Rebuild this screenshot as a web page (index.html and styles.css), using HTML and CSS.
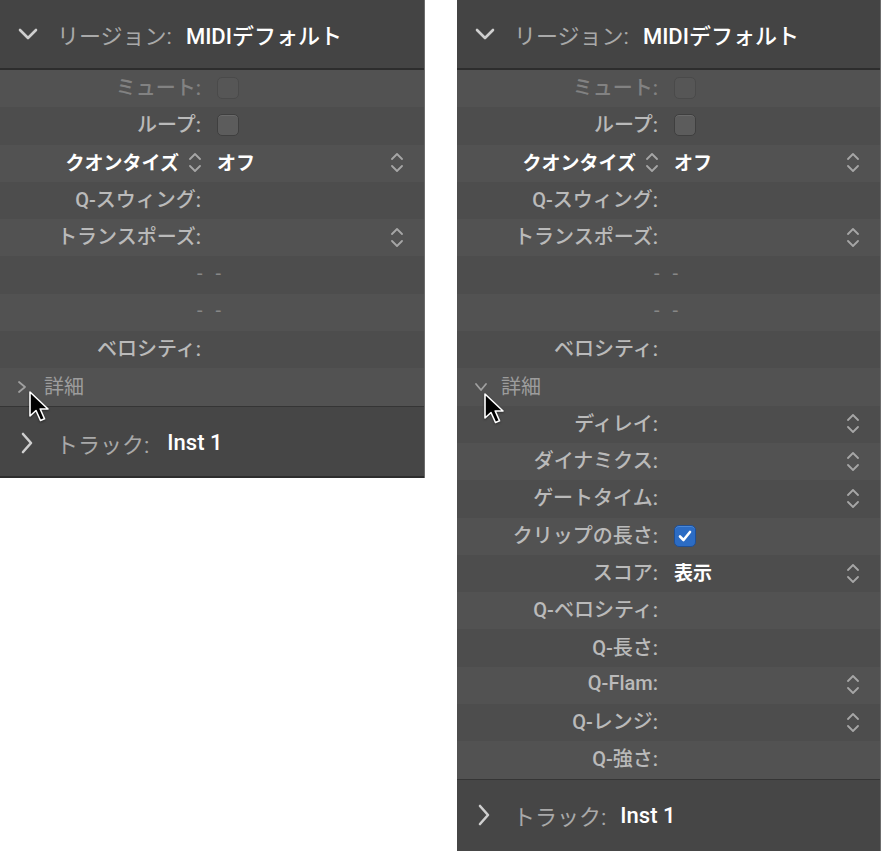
FILE: index.html
```html
<!DOCTYPE html>
<html lang="ja">
<head>
  <meta charset="UTF-8">
  <meta name="viewport" content="width=device-width, initial-scale=1.0">
  <title>リージョンインスペクタ</title>
  <link rel="stylesheet" href="styles.css">
</head>
<body>
  <div class="inspectors">

    <!-- closed details -->
    <section class="panel panel-left">
      <div class="panel-head">
        <svg class="chev-down" width="20" height="12" viewBox="0 0 20 12"><polyline points="2,2 10,10 18,2"/></svg>
        <span class="head-label">リージョン:</span>
        <span class="head-value">MIDIデフォルト</span>
      </div>
      <div class="rows">
        <div class="row"><span class="label dim">ミュート:</span><span class="value"><span class="check dim"></span></span></div>
        <div class="row"><span class="label">ループ:</span><span class="value"><span class="check"></span></span></div>
        <div class="row">
          <span class="label strong">クオンタイズ <svg class="stepper" width="12" height="21" viewBox="0 0 12 21"><polyline points="1,7 6,2 11,7"/><polyline points="1,14 6,19 11,14"/></svg></span>
          <span class="value strong">オフ</span>
          <svg class="stepper" width="12" height="21" viewBox="0 0 12 21"><polyline points="1,7 6,2 11,7"/><polyline points="1,14 6,19 11,14"/></svg>
        </div>
        <div class="row"><span class="label">Q-スウィング:</span><span class="value"></span></div>
        <div class="row">
          <span class="label">トランスポーズ:</span><span class="value"></span>
          <svg class="stepper" width="12" height="21" viewBox="0 0 12 21"><polyline points="1,7 6,2 11,7"/><polyline points="1,14 6,19 11,14"/></svg>
        </div>
        <div class="row"><span class="dashes">- -</span></div>
        <div class="row"><span class="dashes">- -</span></div>
        <div class="row"><span class="label">ベロシティ:</span><span class="value"></span></div>
        <div class="row disclosure">
          <svg class="chev-small" width="10" height="14" viewBox="0 0 10 14"><polyline points="2,2 8,7 2,12"/></svg>
          <span>詳細</span>
        </div>
      </div>
      <div class="panel-foot">
        <svg class="chev-right" width="14" height="22" viewBox="0 0 14 22"><polyline points="3,2 11,11 3,20"/></svg>
        <span class="head-label">トラック:</span>
        <span class="head-value">Inst 1</span>
      </div>
      <svg class="cursor cursor-left" width="24" height="34" viewBox="0 0 24 34"><path d="M2,2 L2,26 L8,20.5 L12.5,30.5 L16.5,28.8 L12.2,19 L20,19 Z"/></svg>
    </section>

    <!-- open details -->
    <section class="panel panel-right">
      <div class="panel-head">
        <svg class="chev-down" width="20" height="12" viewBox="0 0 20 12"><polyline points="2,2 10,10 18,2"/></svg>
        <span class="head-label">リージョン:</span>
        <span class="head-value">MIDIデフォルト</span>
      </div>
      <div class="rows">
        <div class="row"><span class="label dim">ミュート:</span><span class="value"><span class="check dim"></span></span></div>
        <div class="row"><span class="label">ループ:</span><span class="value"><span class="check"></span></span></div>
        <div class="row">
          <span class="label strong">クオンタイズ <svg class="stepper" width="12" height="21" viewBox="0 0 12 21"><polyline points="1,7 6,2 11,7"/><polyline points="1,14 6,19 11,14"/></svg></span>
          <span class="value strong">オフ</span>
          <svg class="stepper" width="12" height="21" viewBox="0 0 12 21"><polyline points="1,7 6,2 11,7"/><polyline points="1,14 6,19 11,14"/></svg>
        </div>
        <div class="row"><span class="label">Q-スウィング:</span><span class="value"></span></div>
        <div class="row">
          <span class="label">トランスポーズ:</span><span class="value"></span>
          <svg class="stepper" width="12" height="21" viewBox="0 0 12 21"><polyline points="1,7 6,2 11,7"/><polyline points="1,14 6,19 11,14"/></svg>
        </div>
        <div class="row"><span class="dashes">- -</span></div>
        <div class="row"><span class="dashes">- -</span></div>
        <div class="row"><span class="label">ベロシティ:</span><span class="value"></span></div>
        <div class="row disclosure">
          <svg class="chev-small" width="14" height="10" viewBox="0 0 14 10"><polyline points="2,2 7,8 12,2"/></svg>
          <span>詳細</span>
        </div>
        <div class="row">
          <span class="label">ディレイ:</span><span class="value"></span>
          <svg class="stepper" width="12" height="21" viewBox="0 0 12 21"><polyline points="1,7 6,2 11,7"/><polyline points="1,14 6,19 11,14"/></svg>
        </div>
        <div class="row">
          <span class="label">ダイナミクス:</span><span class="value"></span>
          <svg class="stepper" width="12" height="21" viewBox="0 0 12 21"><polyline points="1,7 6,2 11,7"/><polyline points="1,14 6,19 11,14"/></svg>
        </div>
        <div class="row">
          <span class="label">ゲートタイム:</span><span class="value"></span>
          <svg class="stepper" width="12" height="21" viewBox="0 0 12 21"><polyline points="1,7 6,2 11,7"/><polyline points="1,14 6,19 11,14"/></svg>
        </div>
        <div class="row">
          <span class="label">クリップの長さ:</span>
          <span class="value"><span class="check checked"><svg width="14" height="12" viewBox="0 0 14 12"><polyline points="2,6.5 5.5,10 12,2"/></svg></span></span>
        </div>
        <div class="row">
          <span class="label">スコア:</span><span class="value strong">表示</span>
          <svg class="stepper" width="12" height="21" viewBox="0 0 12 21"><polyline points="1,7 6,2 11,7"/><polyline points="1,14 6,19 11,14"/></svg>
        </div>
        <div class="row"><span class="label">Q-ベロシティ:</span><span class="value"></span></div>
        <div class="row"><span class="label">Q-長さ:</span><span class="value"></span></div>
        <div class="row">
          <span class="label">Q-Flam:</span><span class="value"></span>
          <svg class="stepper" width="12" height="21" viewBox="0 0 12 21"><polyline points="1,7 6,2 11,7"/><polyline points="1,14 6,19 11,14"/></svg>
        </div>
        <div class="row">
          <span class="label">Q-レンジ:</span><span class="value"></span>
          <svg class="stepper" width="12" height="21" viewBox="0 0 12 21"><polyline points="1,7 6,2 11,7"/><polyline points="1,14 6,19 11,14"/></svg>
        </div>
        <div class="row"><span class="label">Q-強さ:</span><span class="value"></span></div>
      </div>
      <div class="panel-foot">
        <svg class="chev-right" width="14" height="22" viewBox="0 0 14 22"><polyline points="3,2 11,11 3,20"/></svg>
        <span class="head-label">トラック:</span>
        <span class="head-value">Inst 1</span>
      </div>
      <svg class="cursor cursor-right" width="24" height="34" viewBox="0 0 24 34"><path d="M2,2 L2,26 L8,20.5 L12.5,30.5 L16.5,28.8 L12.2,19 L20,19 Z"/></svg>
    </section>

  </div>
</body>
</html>
```

FILE: styles.css
```css
* {
  box-sizing: border-box;
}

body {
  margin: 0;
  background: #fff;
  font-family: Roboto, 'Liberation Sans', 'Noto Sans CJK JP', sans-serif;
  overflow: hidden;
}

.inspectors {
  display: flex;
  align-items: flex-start;
  gap: 32px;
}

.panel {
  position: relative;
  width: 425px;
  background: #4f4f4f;
  border-right: 1px solid #6c6c6c;
  color: #bababa;
}

.panel-right {
  width: 424px;
  border-left: 1px solid #6c6c6c;
  height: 860px;
}

.panel-right .panel-head,
.panel-right .panel-foot,
.panel-right .row {
  margin-left: -1px;
}

.panel-head {
  height: 70px;
  display: flex;
  align-items: center;
  padding-left: 18px;
  padding-bottom: 1px;
  background: #444;
  border-bottom: 2px solid #2d2d2d;
  font-size: 22px;
}

.panel-foot {
  height: 72px;
  display: flex;
  align-items: center;
  padding-left: 20px;
  padding-top: 3px;
  background: #464646;
  border-top: 1px solid #353535;
  border-bottom: 2px solid #2d2d2d;
  font-size: 22px;
}

.panel-right .panel-foot {
  height: 80px;
  padding-top: 0;
  padding-bottom: 8px;
  border-bottom: none;
}

.chev-down,
.chev-right {
  fill: none;
  stroke: #cfcfcf;
  stroke-width: 2.6;
  stroke-linecap: round;
  stroke-linejoin: round;
}

.chev-right {
  margin-right: 22px;
}

.chev-down {
  margin-right: 19px;
}

.head-label {
  color: #a9a9a9;
  margin-right: 14px;
}

.panel-foot .head-value {
  margin-left: 4px;
}

.panel-right .panel-foot .head-value {
  margin-left: 0;
}

.head-value {
  color: #fff;
  font-weight: 500;
}

.row {
  height: 37.3px;
  display: flex;
  align-items: center;
  padding-bottom: 4px;
  font-size: 20px;
  font-weight: 500;
  background: #4d4d4d;
}

.row:nth-child(odd) {
  background: #525252;
}

.label {
  width: 201px;
  flex-shrink: 0;
  text-align: right;
  display: flex;
  justify-content: flex-end;
  align-items: center;
  gap: 10px;
}

.label.dim {
  color: #828282;
}

.strong {
  color: #fff;
  font-weight: 700;
  font-size: 19px;
}

.value {
  flex: 1;
  margin-left: 16px;
  display: flex;
  align-items: center;
}

.check {
  width: 22px;
  height: 22px;
  border-radius: 5px;
  background: #5c5c5c;
  border: 1px solid #3f3f3f;
  box-shadow: inset 0 1px 0 #6a6a6a;
  display: flex;
  align-items: center;
  justify-content: center;
  margin-top: 3px;
}

.check.dim {
  background: #565656;
  border-color: #4a4a4a;
  box-shadow: none;
}

.check.checked {
  background: #2c6cc4;
  border-color: #1f4f95;
  box-shadow: inset 0 1px 0 #4a88d8;
}

.check.checked svg {
  fill: none;
  stroke: #fff;
  stroke-width: 2.6;
  stroke-linecap: round;
  stroke-linejoin: round;
}

.stepper {
  fill: none;
  stroke: #a6a6a6;
  stroke-width: 1.8;
  stroke-linecap: round;
  stroke-linejoin: round;
  flex-shrink: 0;
  margin-top: 3px;
}

.row > .stepper {
  margin-right: 21px;
}

.dashes {
  padding-left: 197px;
  color: #878787;
  word-spacing: 8px;
  font-weight: 400;
}

.disclosure {
  padding-left: 17px;
  color: #9d9d9d;
  font-weight: 400;
}

.chev-small {
  fill: none;
  stroke: #a0a0a0;
  stroke-width: 1.8;
  stroke-linecap: round;
  stroke-linejoin: round;
  margin-right: 17px;
  margin-top: 3px;
}

.panel-right .disclosure .chev-small {
  margin-right: 13px;
}

.cursor {
  position: absolute;
  fill: #000;
  stroke: #fff;
  stroke-width: 1.6;
  stroke-linejoin: round;
  filter: drop-shadow(0 1px 1px rgba(0, 0, 0, 0.4));
}

.cursor-left {
  left: 28px;
  top: 390px;
}

.cursor-right {
  left: 25px;
  top: 392px;
}
```
